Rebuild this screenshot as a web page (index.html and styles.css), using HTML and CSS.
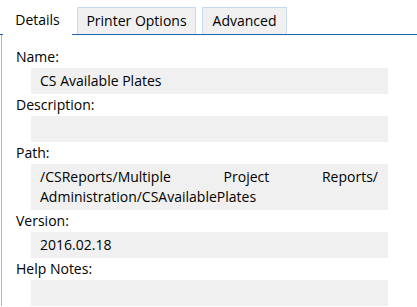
FILE: index.html
```html
<!DOCTYPE html>
<html>
<head>
    <title>Report Properties</title>
    <link rel="stylesheet" href="styles.css">
</head>
<body>
    <div class="tabs">
        <div class="tab tab-active" style="width: 69px">Details</div>
        <div class="tab" style="width: 119px">Printer Options</div>
        <div class="tab" style="width: 85px">Advanced</div>
    </div>

    <div class="panel">
        <div class="label">Name:</div>
        <div class="field">CS Available Plates</div>

        <div class="label">Description:</div>
        <div class="field"></div>

        <div class="label">Path:</div>
        <div class="field field-path">/CSReports/Multiple Project Reports/<wbr>Administration/CSAvailablePlates</div>

        <div class="label">Version:</div>
        <div class="field">2016.02.18</div>

        <div class="label">Help Notes:</div>
        <div class="field"></div>
    </div>
</body>
</html>
```

FILE: styles.css
```css
body {
    margin: 0;
    font-family: "Open Sans", "Noto Sans", sans-serif;
    font-size: 14px;
    color: #000;
    background: #fff;
    overflow: hidden;
}
.tabs {
    display: flex;
    align-items: flex-end;
    height: 34px;
    padding-left: 3px;
    border-bottom: 1px solid #1f64b0;
}
.tab {
    box-sizing: border-box;
    height: 27px;
    line-height: 25px;
    text-align: center;
    white-space: nowrap;
    background: #f0f0f0;
    border: 1px solid #c5dbf1;
    border-bottom: none;
    margin-right: 6px;
}
.tab-active {
    height: 30px;
    line-height: 27px;
    margin-bottom: -1px;
    margin-right: 5px;
    background: #fff;
    border-color: #fff;
}
.panel {
    margin-left: 1px;
    border-left: 1px solid #a3b8d6;
    padding-top: 11px;
}
.label {
    height: 22px;
    line-height: 22px;
    padding-left: 14px;
}
.field {
    width: 357px;
    box-sizing: border-box;
    margin-left: 29px;
    min-height: 26px;
    padding: 3px 10px 3px 9px;
    line-height: 20px;
    background: #f0f0f0;
}
.field-path {
    text-align: justify;
}
```
